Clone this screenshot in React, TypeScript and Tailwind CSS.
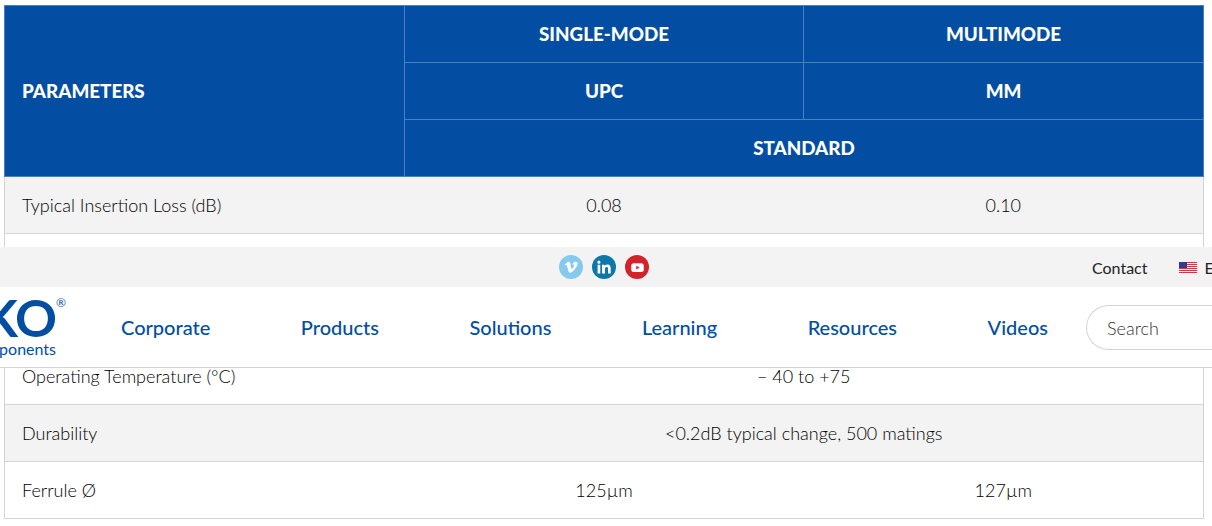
const font = "font-['Lato','Liberation_Sans',sans-serif]";

function Th({ children, colSpan, rowSpan, left }: { children: string; colSpan?: number; rowSpan?: number; left?: boolean }) {
  return (
    <th colSpan={colSpan} rowSpan={rowSpan} className={`border border-[#4a7fc0] px-[17px] pt-[1px] text-[18.8px] font-black text-white ${left ? "text-left" : "text-center"}`}>
      {children}
    </th>
  );
}

function Row({ label, a, b, shade }: { label: string; a: string; b?: string; shade?: boolean }) {
  return (
    <tr className={`h-[57px] border-y border-[#d4d4d4] font-light text-[18px] text-black ${shade ? "bg-[#f3f3f3]" : "bg-white"}`}>
      <td className="border-l border-[#d4d4d4] px-[17px]">{label}</td>
      <td colSpan={b ? 1 : 2} className={`px-[17px] text-center ${b ? "" : "border-r border-[#d4d4d4]"}`}>{a}</td>
      {b && <td className="border-r border-[#d4d4d4] px-[17px] text-center">{b}</td>}
    </tr>
  );
}

function Vimeo() {
  return (
    <span className="flex h-6 w-6 items-center justify-center rounded-full bg-[#86c9ef]">
      <svg viewBox="0 0 24 24" className="h-[14px] w-[14px]" fill="#fff">
        <path d="M23 7c-.1 2.200-1.600 5.100-4.600 9-3 4-5.600 6-7.700 6-1.300 0-2.400-1.200-3.300-3.600L5.600 11.800C5 9.400 4.300 8.200 3.600 8.200c-.2 0-.7.300-1.700 1L1 8c1.100-1 2.200-2 3.300-3 1.500-1.300 2.600-2 3.300-2 1.800-.2 2.900 1 3.300 3.600.4 2.800.7 4.600.9 5.300.5 2.300 1.100 3.400 1.700 3.400.5 0 1.200-.7 2.200-2.300.9-1.500 1.500-2.700 1.500-3.500.1-1.300-.4-2-1.500-2-.5 0-1.100.1-1.600.4 1.100-3.500 3.100-5.200 6.100-5.100 2.200 0 3.300 1.500 3.100 4.200z" />
      </svg>
    </span>
  );
}

function LinkedIn() {
  return (
    <span className="flex h-6 w-6 items-center justify-center rounded-full bg-[#0e76a8]">
      <svg viewBox="0 0 24 24" className="h-[14px] w-[14px]" fill="#fff">
        <path d="M1 8h4.600v15H1zM3.300 1a2.700 2.700 0 1 1 0 5.400 2.700 2.700 0 0 1 0-5.400zM8.600 8H13v2.100c.7-1.200 2.300-2.500 4.700-2.500 4.900 0 5.800 3.200 5.800 7.400V23h-4.600v-7.100c0-1.700 0-3.900-2.400-3.900s-2.800 1.900-2.800 3.800V23H8.600z" />
      </svg>
    </span>
  );
}

function YouTube() {
  return (
    <span className="flex h-6 w-6 items-center justify-center rounded-full bg-[#d2232a]">
      <svg viewBox="0 0 24 24" className="h-[15px] w-[15px]">
        <rect x="2" y="5" width="20" height="14" rx="4" fill="#fff" />
        <path d="M10 9l5.500 3-5.500 3z" fill="#d2232a" />
      </svg>
    </span>
  );
}

function Flag() {
  return (
    <svg viewBox="0 0 18 12" className="block h-3 w-[18px]">
      <rect width="18" height="12" fill="#fff" />
      <path d="M0 .5h18M0 2.500h18M0 4.500h18M0 6.500h18M0 8.500h18M0 10.500h18" stroke="#d8343f" strokeWidth="1" />
      <rect width="8" height="6" fill="#2f3a9f" />
    </svg>
  );
}

export default function App() {
  return (
    <div className={`relative h-[526px] w-[1212px] overflow-hidden bg-white ${font}`}>
      <div className="px-1 pt-[5px]">
        <table className="w-[1199px] table-fixed border-collapse">
          <colgroup>
            <col className="w-[400px]" />
            <col className="w-[399px]" />
            <col className="w-[400px]" />
          </colgroup>
          <thead className="bg-[#034ea2]">
            <tr className="h-[57px]">
              <Th rowSpan={3} left>PARAMETERS</Th>
              <Th>SINGLE-MODE</Th>
              <Th>MULTIMODE</Th>
            </tr>
            <tr className="h-[57px]">
              <Th>UPC</Th>
              <Th>MM</Th>
            </tr>
            <tr className="h-[57px]">
              <Th colSpan={2}>STANDARD</Th>
            </tr>
          </thead>
          <tbody>
            <Row shade label="Typical Insertion Loss (dB)" a="0.08" b="0.10" />
            <Row label="Typical Return Loss (dB)" a="50" b="30" />
            <Row shade label="Wavelength (nm)" a="1310 / 1550" b="850 / 1300" />
            <Row label="Operating Temperature (°C)" a="– 40 to +75" />
            <Row shade label="Durability" a="<0.2dB typical change, 500 matings" />
            <Row label="Ferrule Ø" a="125µm" b="127µm" />
          </tbody>
        </table>
      </div>

      <header className="absolute left-0 top-[247px] w-[1212px] border-b border-[#d4d4d4] bg-white">
        <div className="relative flex h-10 items-center justify-center gap-[9px] bg-[#f3f3f3] pr-1">
          <Vimeo />
          <LinkedIn />
          <YouTube />
          <div className="absolute left-[1092px] top-[1px] flex h-10 items-center text-[16px] text-[#222]">
            <span>Contact</span>
            <span className="ml-8"><Flag /></span>
            <span className="ml-[7px]">English</span>
          </div>
        </div>
        <div className="flex h-[80px] items-center">
          <div className="flex h-[80px] w-[121px] shrink-0 flex-col text-[#034ea2]">
            <div className="relative flex w-[56px] flex-col items-end whitespace-nowrap">
              <span className="text-[52px] font-bold leading-[60px] tracking-[-1px]">SENKO</span>
              <span className="absolute left-[56px] top-[10px] text-[12px] leading-none">®</span>
              <span className="-mt-[6px] text-[16px] leading-none font-normal">Advanced Components</span>
            </div>
          </div>
          <nav className="flex w-[927px] shrink-0 items-center justify-between text-[20px] font-medium text-[#034ea2]">
            <a>Corporate</a>
            <a>Products</a>
            <a>Solutions</a>
            <a>Learning</a>
            <a>Resources</a>
            <a>Videos</a>
          </nav>
          <div className="ml-[38px] flex h-[45px] w-[200px] shrink-0 items-center rounded-l-[23px] border border-r-0 border-[#d4d4d4] pl-[20px] pt-[2px] text-[18px] font-light text-[#333]">
            Search
          </div>
        </div>
      </header>
    </div>
  );
}
